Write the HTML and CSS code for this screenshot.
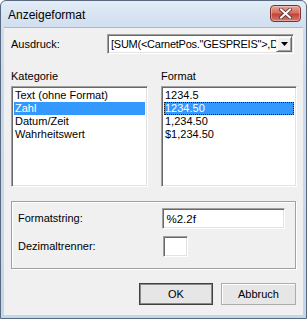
FILE: index.html
```html
<!DOCTYPE html>
<html lang="de">
<head>
    <meta charset="UTF-8">
    <title>Anzeigeformat</title>
    <link rel="stylesheet" href="styles.css">
</head>
<body>
    <div class="window">
        <div class="titlebar">
            <span class="title">Anzeigeformat</span>
            <button class="close" aria-label="Schließen">
                <svg width="13" height="11" viewBox="0 0 13 11">
                    <path d="M2 1.5 L11 9.5 M11 1.5 L2 9.5" stroke="#5a2a2a" stroke-width="3.6" stroke-linecap="square"/>
                    <path d="M2 1.5 L11 9.5 M11 1.5 L2 9.5" stroke="#ffffff" stroke-width="2" stroke-linecap="square"/>
                </svg>
            </button>
        </div>

        <div class="client">
            <div class="row-expr">
                <label class="label">Ausdruck:</label>
                <div class="combo">
                    <span class="combo-text">[SUM(&lt;CarnetPos."GESPREIS"&gt;,D</span>
                    <span class="combo-btn">
                        <svg width="7" height="4" viewBox="0 0 7 4"><path d="M0 0 H7 L3.5 4 Z" fill="#000"/></svg>
                    </span>
                </div>
            </div>

            <div class="lists">
                <div class="col">
                    <div class="label">Kategorie</div>
                    <ul class="listbox">
                        <li>Text (ohne Format)</li>
                        <li class="selected">Zahl</li>
                        <li>Datum/Zeit</li>
                        <li>Wahrheitswert</li>
                    </ul>
                </div>
                <div class="col">
                    <div class="label">Format</div>
                    <ul class="listbox">
                        <li>1234.5</li>
                        <li class="selected focused">1234.50</li>
                        <li>1,234.50</li>
                        <li>$1,234.50</li>
                    </ul>
                </div>
            </div>

            <div class="group">
                <div class="field">
                    <label class="label">Formatstring:</label>
                    <div class="textbox wide">%2.2f</div>
                </div>
                <div class="field">
                    <label class="label">Dezimaltrenner:</label>
                    <div class="textbox small"></div>
                </div>
            </div>

            <div class="buttons">
                <button class="btn default">OK</button>
                <button class="btn">Abbruch</button>
            </div>
        </div>
    </div>
</body>
</html>
```

FILE: styles.css
```css
html, body {
    margin: 0;
    padding: 0;
}

body {
    width: 307px;
    height: 319px;
    font-family: "Liberation Sans", Arial, sans-serif;
    font-size: 11px;
    color: #000;
}

/* Window frame */
.window {
    box-sizing: border-box;
    width: 307px;
    height: 319px;
    border: 1px solid #5a6a7e;
    border-radius: 6px 6px 0 0;
    background: linear-gradient(#e3ecf7, #cddcef 30px, #c2d6ed);
    display: flex;
    flex-direction: column;
}

.titlebar {
    height: 26px;
    display: flex;
    align-items: center;
    justify-content: space-between;
    padding: 0 5px 0 7px;
}

.title {
    font-size: 12px;
    color: #000;
    padding-top: 1px;
}

.close {
    width: 31px;
    height: 17px;
    margin-top: -1px;
    padding: 0;
    border: 1px solid #7d3030;
    border-radius: 4px;
    background: linear-gradient(#e8a493, #d7705f 45%, #c4433a 55%, #d3796a);
    box-shadow: inset 0 0 0 1px rgba(255, 255, 255, 0.35);
    display: flex;
    align-items: center;
    justify-content: center;
}

.client {
    flex: 1;
    margin: 0 3px 3px;
    background: #f0f0f0;
    padding: 6px 7px 0;
    display: flex;
    flex-direction: column;
    border-top: 1px solid #a9b9cc;
}

.label {
    line-height: 13px;
    white-space: nowrap;
}

/* Ausdruck row */
.row-expr {
    display: flex;
    align-items: center;
    height: 20px;
}

.row-expr .label {
    width: 96px;
}

.combo {
    box-sizing: border-box;
    width: 187px;
    height: 20px;
    background: #fff;
    border: 1px solid;
    border-color: #a0a0a0 #fff #fff #a0a0a0;
    box-shadow: inset 1px 1px #696969, inset -1px -1px #e3e3e3;
    display: flex;
    align-items: center;
    padding: 0 1px 0 3px;
}

.combo-text {
    flex: 1;
    min-width: 0;
    white-space: nowrap;
    font-size: 11px;
    letter-spacing: -0.25px;
}

.combo-btn {
    box-sizing: border-box;
    width: 16px;
    height: 16px;
    flex: none;
    background: #f0f0f0;
    border: 1px solid;
    border-color: #f0f0f0 #696969 #696969 #f0f0f0;
    box-shadow: inset 1px 1px #fff, inset -1px -1px #a0a0a0;
    display: flex;
    align-items: center;
    justify-content: center;
}

/* Lists */
.lists {
    display: flex;
    gap: 13px;
    margin-top: 16px;
}

.col {
    display: flex;
    flex-direction: column;
    gap: 3px;
}

.col:first-child .listbox {
    width: 137px;
}

.col:last-child .listbox {
    width: 136px;
}

.listbox {
    box-sizing: border-box;
    height: 101px;
    margin: 0;
    list-style: none;
    background: #fff;
    border: 1px solid;
    border-color: #a0a0a0 #fff #fff #a0a0a0;
    box-shadow: inset 1px 1px #696969, inset -1px -1px #e3e3e3;
    padding: 2px;
}

.listbox li {
    box-sizing: border-box;
    height: 13px;
    line-height: 13px;
    padding-left: 1px;
    white-space: nowrap;
    color: #000;
}

.listbox li.selected {
    background: #3399ff;
    color: #fff;
}

.listbox li.focused {
    outline: 1px dotted #1a1a1a;
    outline-offset: -1px;
}

/* Group box */
.group {
    margin-top: 14px;
    height: 68px;
    box-sizing: border-box;
    border: 1px solid #a0a0a0;
    box-shadow: inset 1px 1px #fff, 1px 1px #fff;
    padding: 6px 10px 0 6px;
    display: flex;
    flex-direction: column;
    gap: 7px;
}

.field {
    display: flex;
    align-items: center;
    height: 21px;
}

.field .label {
    width: 145px;
}

.textbox {
    box-sizing: border-box;
    height: 21px;
    background: #fff;
    border: 1px solid;
    border-color: #a0a0a0 #fff #fff #a0a0a0;
    box-shadow: inset 1px 1px #696969, inset -1px -1px #e3e3e3;
    padding: 3px 3px 0;
    font-size: 11.5px;
    line-height: 14px;
}

.textbox.wide {
    width: 123px;
}

.textbox.small {
    width: 25px;
}

/* Buttons */
.buttons {
    margin-top: 14px;
    display: flex;
    justify-content: flex-end;
    gap: 8px;
}

.btn {
    box-sizing: border-box;
    width: 74px;
    height: 22px;
    font-family: "Liberation Sans", Arial, sans-serif;
    font-size: 11px;
    color: #000;
    background: #e6e6e6;
    border: 1px solid #adadad;
    box-shadow: inset 1px 1px #fff;
    padding: 0;
}

.btn:last-child {
    width: 75px;
}

.btn.default {
    border-color: #404040;
    box-shadow: inset 0 0 0 1px #8a8a8a;
}
```
